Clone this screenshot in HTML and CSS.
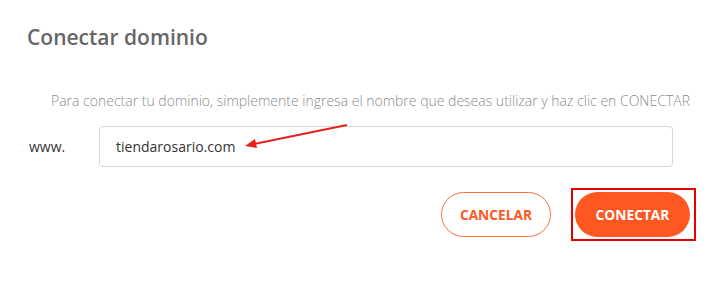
FILE: index.html
```html
<!DOCTYPE html>
<html lang="es">
<head>
<meta charset="utf-8">
<title>Conectar dominio</title>
<link rel="stylesheet" href="styles.css">
</head>
<body>
<div class="modal">
  <h2 class="title">Conectar dominio</h2>
  <p class="desc">Para conectar tu dominio, simplemente ingresa el nombre que deseas utilizar y haz clic en CONECTAR</p>
  <div class="row">
    <span class="prefix">www.</span>
    <div class="field">
      <span class="value">tiendarosario.com</span>
      <svg class="arrow" width="110" height="30" viewBox="0 0 110 30">
        <line x1="105" y1="2" x2="12" y2="21" stroke="#e8201c" stroke-width="2"/>
        <polygon points="3,23 13,16 15,25" fill="#e8201c"/>
      </svg>
    </div>
  </div>
  <div class="actions">
    <button class="btn btn-outline">CANCELAR</button>
    <div class="highlight">
      <button class="btn btn-fill">CONECTAR</button>
    </div>
  </div>
</div>
</body>
</html>
```
FILE: styles.css
```css
* { box-sizing: border-box; }
html, body { margin: 0; padding: 0; background: #fff; }
body { font-family: "Open Sans", "Noto Sans", sans-serif; width: 708px; height: 299px; overflow: hidden; }
.modal { padding: 22px 0 0 27px; }
.title { margin: 0; font-size: 21px; font-weight: 600; color: #666; line-height: 30px; }
.desc { margin: 39px 0 0 24px; font-size: 14px; font-weight: 300; color: #8c8c8c; line-height: 20px; }
.row { display: flex; align-items: center; margin-top: 15px; }
.prefix { width: 72px; padding-left: 2px; font-size: 14px; color: #333; }
.field { position: relative; width: 574px; height: 41px; border: 1px solid #d5d5d5; border-radius: 4px; display: flex; align-items: center; padding-left: 16px; }
.value { font-size: 14px; color: #333; }
.arrow { position: absolute; left: 142px; top: -4px; }
.actions { display: flex; justify-content: flex-end; align-items: center; gap: 20px; margin-top: 21px; width: 669px; }
.btn { font-family: "Open Sans", sans-serif; font-weight: 700; font-size: 13.75px; height: 45px; border-radius: 23px; cursor: pointer; padding: 0; }
.btn-outline { width: 110px; background: #fff; color: #ff5a23; border: 1px solid #ff6b3d; }
.highlight { border: 2px solid #e80000; padding: 2px 4px 2px 2px; }
.btn-fill { display: block; width: 115px; background: #ff5722; color: #fff; border: none; }
```
